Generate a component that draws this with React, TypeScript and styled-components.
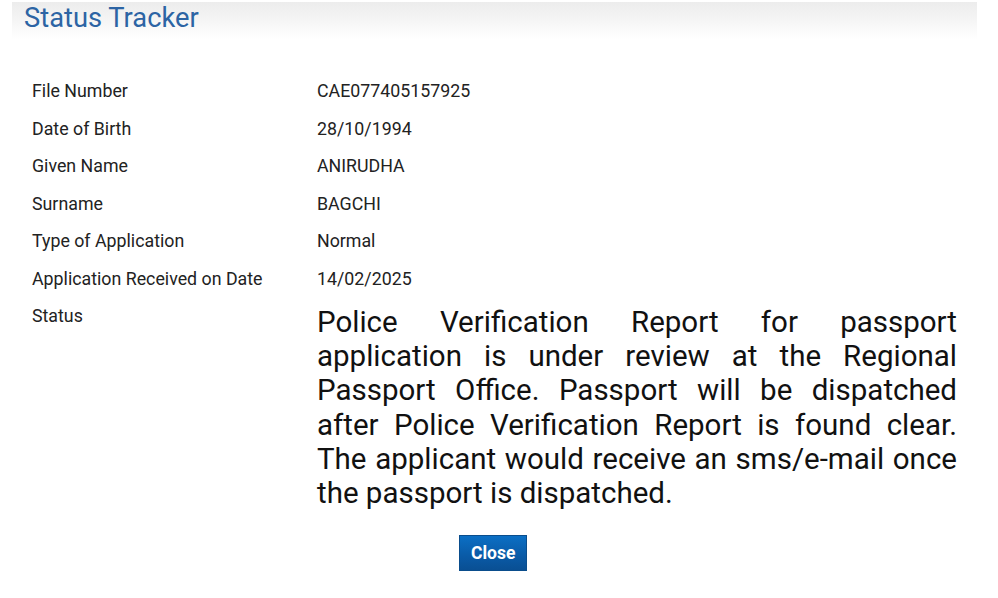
import { Fragment } from 'react'
import styled, { createGlobalStyle } from 'styled-components'

const Global = createGlobalStyle`
	body {
		margin: 0;
		background: #fff;
		font-family: Roboto, "Liberation Sans", sans-serif;
	}
`

const Page = styled.div`
	width: 998px;
	height: 598px;
	overflow: hidden;
	padding: 2px 21px 0 12px;
	box-sizing: border-box;
`

const TitleBar = styled.div`
	height: 37px;
	background: linear-gradient(to bottom, #ececec 0%, #f5f5f5 50%, #ffffff 100%);
	padding-left: 12px;
	display: flex;
	align-items: flex-start;
`

const Title = styled.h2`
	margin: 0;
	font-weight: 400;
	font-size: 27.3px;
	line-height: 32px;
	color: #2c64a4;
`

const Details = styled.div`
	display: grid;
	grid-template-columns: 285px 640px;
	grid-template-rows: repeat(6, 37.5px) auto;
	padding: 33px 0 0 20px;
`

const Label = styled.div`
	font-size: 17.8px;
	color: #222;
	line-height: 37.5px;
`

const Value = styled.div`
	font-size: 17.8px;
	color: #222;
	line-height: 37.5px;
`

const StatusText = styled.div`
	font-size: 29.5px;
	line-height: 34.2px;
	color: #111;
	text-align: justify;
	padding-top: 8px;
`

const Footer = styled.div`
	display: flex;
	padding: 25px 0 0 447px;
`

const CloseButton = styled.button`
	height: 36px;
	padding: 0 11px;
	border: 1px solid #0a4d8c;
	background: linear-gradient(to bottom, #0b6fc4 0%, #0a5aa6 60%, #094f93 100%);
	color: #fff;
	font-family: Roboto, "Liberation Sans", sans-serif;
	font-weight: 700;
	font-size: 17.5px;
	cursor: pointer;
`

const rows: [string, string][] = [
	['File Number', 'CAE077405157925'],
	['Date of Birth', '28/10/1994'],
	['Given Name', 'ANIRUDHA'],
	['Surname', 'BAGCHI'],
	['Type of Application', 'Normal'],
	['Application Received on Date', '14/02/2025'],
]

export default function App() {
	return (
		<Page>
			<Global />
			<TitleBar>
				<Title>Status Tracker</Title>
			</TitleBar>
			<Details>
				{rows.map(([k, v]) => (
					<Fragment key={k}>
						<Label>{k}</Label>
						<Value>{v}</Value>
					</Fragment>
				))}
				<Label>Status</Label>
				<StatusText>
					Police Verification Report for passport application is under review at the Regional
					Passport Office. Passport will be dispatched after Police Verification Report is found
					clear. The applicant would receive an sms/e-mail once the passport is dispatched.
				</StatusText>
			</Details>
			<Footer>
				<CloseButton>Close</CloseButton>
			</Footer>
		</Page>
	)
}
